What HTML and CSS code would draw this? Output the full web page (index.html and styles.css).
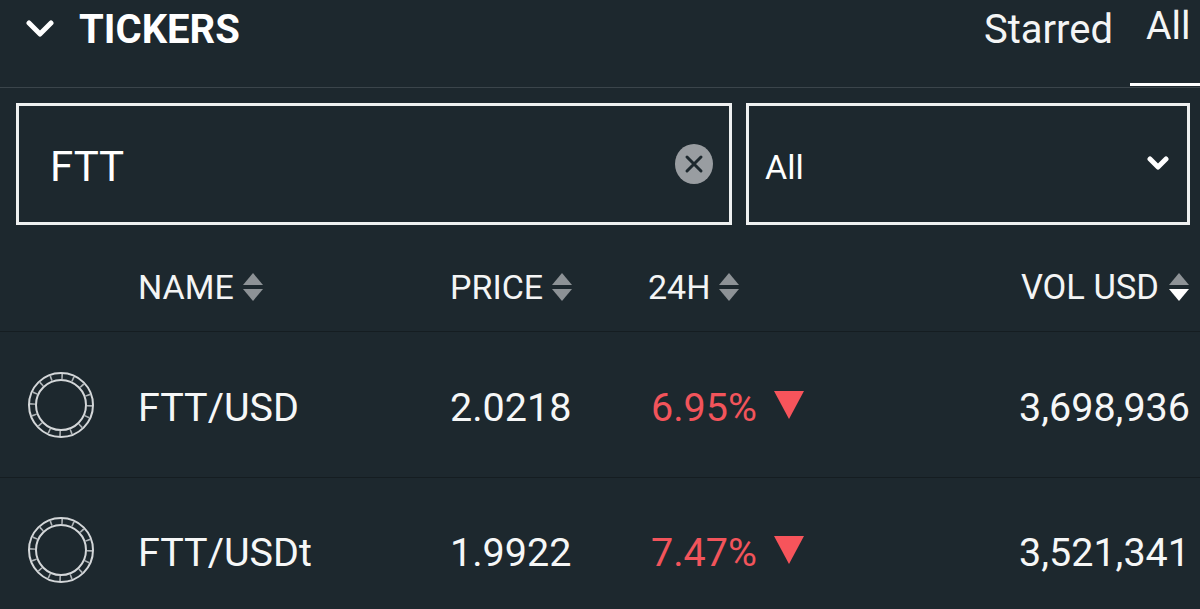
FILE: index.html
```html
<!DOCTYPE html>
<html lang="en">
<head>
    <meta charset="UTF-8">
    <title>Tickers</title>
    <link rel="stylesheet" href="styles.css">
</head>
<body>
    <svg class="defs" width="0" height="0">
        <symbol id="coin" viewBox="0 0 68 68">
            <circle cx="34" cy="34" r="32" fill="none" stroke="#d4d7d9" stroke-width="2"></circle>
            <circle cx="34" cy="34" r="25" fill="none" stroke="#d4d7d9" stroke-width="2"></circle>
            <circle cx="34" cy="34" r="28.5" fill="none" stroke="#aeb3b6" stroke-width="5" stroke-dasharray="1.6 9.6"></circle>
        </symbol>
        <symbol id="sort" viewBox="0 0 22 28">
            <path class="sort-up" d="M11 0 L21 12 H1 Z"></path>
            <path class="sort-down" d="M1 16 H21 L11 28 Z"></path>
        </symbol>
    </svg>

    <div class="panel">
        <div class="top-bar">
            <div class="title">
                <svg class="chevron" viewBox="0 0 28 20"><path d="M3 4 L14 15 L25 4"></path></svg>
                <span>TICKERS</span>
            </div>
            <div class="tabs">
                <span class="tab">Starred</span>
                <span class="tab active">All</span>
            </div>
        </div>

        <div class="filters">
            <div class="search">
                <span class="field-text">FTT</span>
                <svg class="clear" viewBox="0 0 38 40">
                    <ellipse cx="19" cy="20" rx="19" ry="20"></ellipse>
                    <path d="M12 13 L26 27 M26 13 L12 27"></path>
                </svg>
            </div>
            <div class="select">
                <span class="field-text">All</span>
                <svg class="select-arrow" viewBox="0 0 22 16"><path d="M3 3 L11 11 L19 3"></path></svg>
            </div>
        </div>

        <div class="row head">
            <div></div>
            <div class="head-cell">NAME <svg class="sort"><use href="#sort"></use></svg></div>
            <div class="head-cell">PRICE <svg class="sort"><use href="#sort"></use></svg></div>
            <div class="head-cell">24H <svg class="sort"><use href="#sort"></use></svg></div>
            <div class="head-cell vol">VOL USD <svg class="sort sorted"><use href="#sort"></use></svg></div>
        </div>

        <div class="row item">
            <div class="coin-cell"><svg class="coin"><use href="#coin"></use></svg></div>
            <div>FTT/USD</div>
            <div>2.0218</div>
            <div class="change">6.95% <span class="down"></span></div>
            <div class="vol">3,698,936</div>
        </div>

        <div class="row item">
            <div class="coin-cell"><svg class="coin"><use href="#coin"></use></svg></div>
            <div>FTT/USDt</div>
            <div>1.9922</div>
            <div class="change">7.47% <span class="down"></span></div>
            <div class="vol">3,521,341</div>
        </div>
    </div>
</body>
</html>
```

FILE: styles.css
```css
:root {
    --bg: #1d282e;
    --white: #ffffff;
    --border: #eef0f0;
    --grey: #8d9296;
    --red: #f2545b;
}

html, body {
    margin: 0;
    height: 100%;
    overflow: hidden;
}

body {
    background-color: var(--bg);
    color: var(--white);
    font-family: Roboto, "Liberation Sans", sans-serif;
}

.defs {
    display: block;
    height: 0;
}

.top-bar {
    height: 87px;
    display: flex;
    justify-content: space-between;
    border-bottom: 1px solid #3b454b;
}

.title {
    display: flex;
    align-items: center;
    gap: 25px;
    height: 58px;
    padding-left: 26px;
    font-size: 40px;
    font-weight: 700;
}

.chevron {
    width: 28px;
    height: 20px;
    fill: none;
    stroke: var(--white);
    stroke-width: 5;
    stroke-linecap: round;
    stroke-linejoin: round;
}

.tabs {
    display: flex;
    align-items: flex-start;
}

.tab {
    font-size: 40px;
    line-height: 60px;
    color: #f4f5f5;
    margin-right: 17px;
}

.tab.active {
    width: 70px;
    height: 86px;
    margin: 0;
    box-sizing: border-box;
    padding-left: 16px;
    border-bottom: 3px solid var(--white);
    line-height: 52px;
    font-size: 39px;
}

.filters {
    display: flex;
    gap: 14px;
    padding: 15px 10px 0 16px;
}

.search, .select {
    height: 122px;
    box-sizing: border-box;
    border: 3px solid var(--border);
    display: flex;
    align-items: center;
    justify-content: space-between;
}

.field-text {
    padding-top: 5px;
}

.search {
    width: 716px;
    padding: 0 16px 0 31px;
    font-size: 42px;
}

.select {
    flex: 1;
    padding: 0 18px 0 16px;
    font-size: 34px;
}

.clear {
    width: 38px;
    height: 40px;
}

.clear ellipse {
    fill: #999da1;
}

.clear path {
    fill: none;
    stroke: var(--bg);
    stroke-width: 3;
    stroke-linecap: round;
}

.select-arrow {
    width: 22px;
    height: 16px;
    fill: none;
    stroke: var(--white);
    stroke-width: 5;
    stroke-linecap: round;
    stroke-linejoin: round;
}

.row {
    display: grid;
    grid-template-columns: 138px 312px 198px 1fr auto;
    align-items: center;
    padding-right: 10px;
    box-sizing: border-box;
    border-bottom: 1px solid #151d21;
}

.head {
    height: 107px;
    padding-top: 18px;
    font-size: 34px;
}

.head-cell {
    display: flex;
    align-items: center;
    gap: 8px;
    color: #f4f5f5;
}

.head-cell.vol {
    gap: 9px;
    font-size: 34.500px;
}

.sort {
    width: 22px;
    height: 28px;
    fill: var(--grey);
}

.sorted {
    --down: var(--white);
}

.sort-down {
    fill: var(--down, var(--grey));
}

.item {
    height: 146px;
    padding-top: 5px;
    font-size: 39.500px;
    color: #f6f7f7;
}

.item + .item {
    margin-top: -1px;
}

.coin-cell {
    padding-left: 27px;
    display: flex;
    margin-top: -5px;
}

.coin {
    width: 68px;
    height: 68px;
}

.change {
    color: var(--red);
    padding-left: 3px;
    display: flex;
    align-items: center;
    gap: 17px;
}

.down {
    width: 0;
    height: 0;
    border-left: 15px solid transparent;
    border-right: 15px solid transparent;
    border-top: 28px solid #f7545b;
    margin-top: -4px;
}

.vol {
    text-align: right;
}
```
